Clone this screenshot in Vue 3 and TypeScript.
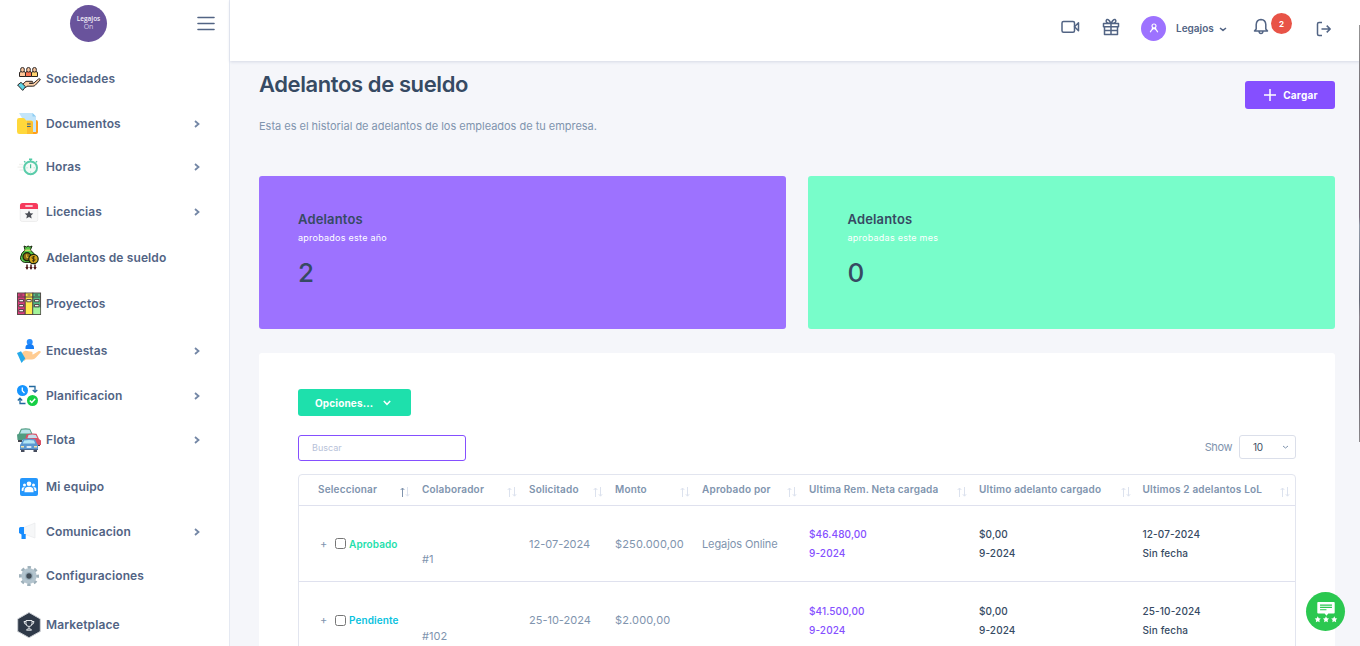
<script setup lang="ts">
interface MenuItem {
  id: string
  label: string
  expandable?: boolean
}

interface Row {
  status: string
  tone: string
  code: string
  requested: string
  amount: string
  approver: string
  salary: string
  last: string
  period: string
  lol: string
}

const menu: MenuItem[] = [
  { id: 'sociedades', label: 'Sociedades' },
  { id: 'documentos', label: 'Documentos', expandable: true },
  { id: 'horas', label: 'Horas', expandable: true },
  { id: 'licencias', label: 'Licencias', expandable: true },
  { id: 'adelantos', label: 'Adelantos de sueldo' },
  { id: 'proyectos', label: 'Proyectos' },
  { id: 'encuestas', label: 'Encuestas', expandable: true },
  { id: 'planificacion', label: 'Planificacion', expandable: true },
  { id: 'flota', label: 'Flota', expandable: true },
  { id: 'equipo', label: 'Mi equipo' },
  { id: 'comunicacion', label: 'Comunicacion', expandable: true },
  { id: 'configuraciones', label: 'Configuraciones' },
  { id: 'marketplace', label: 'Marketplace' },
]

const cards = [
  { tone: 'violet', title: 'Adelantos', note: 'aprobados este año', total: '2' },
  { tone: 'mint', title: 'Adelantos', note: 'aprobadas este mes', total: '0' },
]

const columns: string[] = [
  'Seleccionar',
  'Colaborador',
  'Solicitado',
  'Monto',
  'Aprobado por',
  'Ultima Rem. Neta cargada',
  'Ultimo adelanto cargado',
  'Ultimos 2 adelantos LoL',
]

const rows: Row[] = [
  { status: 'Aprobado', tone: 'approved', code: '#1', requested: '12-07-2024', amount: '$250.000,00', approver: 'Legajos Online', salary: '$46.480,00', last: '$0,00', period: '9-2024', lol: '12-07-2024' },
  { status: 'Pendiente', tone: 'pending', code: '#102', requested: '25-10-2024', amount: '$2.000,00', approver: '', salary: '$41.500,00', last: '$0,00', period: '9-2024', lol: '25-10-2024' },
]
</script>

<template>
  <div class="app">
    <aside class="sidebar">
      <div class="brand">
        <div class="logo"><span>Legajos</span><span class="on">On</span></div>
        <svg class="burger" viewBox="0 0 18 14"><path d="M1 1.500h16M1 7.500h16M1 13.500h16" /></svg>
      </div>
      <nav class="menu">
        <a v-for="item in menu" :key="item.id" class="item">
          <svg class="icon" viewBox="0 0 24 24">
            <g v-if="item.id === 'sociedades'" stroke="#2b2422" stroke-width="1" stroke-linejoin="round">
              <path d="M2.5 9.500v-3.500q0-1.300 1.700-1.500h2.800q1.500.2 1.500 1.500v3.500z" fill="#ffc89a" />
              <path d="M8.500 9.500v-3.500q0-1.300 1.500-1.500h3q1.500.2 1.500 1.500v3.500z" fill="#fb7452" />
              <path d="M14.500 9.500v-3.500q0-1.300 1.500-1.500h3q1.500.2 1.500 1.500v3.500z" fill="#ffd470" />
              <rect x="3.700" y="0.500" width="3.600" height="4.600" rx="1.700" fill="#f8c6a0" />
              <rect x="9.700" y="0.500" width="3.600" height="4.600" rx="1.700" fill="#f8c6a0" />
              <rect x="15.700" y="0.500" width="3.600" height="4.600" rx="1.700" fill="#f8c6a0" />
              <path d="M5.500 17.500 9 14.300h6.300q1.300 1.200 0 2h-3 4.200l5-4.300q2-.6 1.800.8l-5 5.400q-1 1-2.500 1H10L8.300 21z" fill="#fbcfa6" />
              <path d="M.6 18 4 15.400l4.600 4.400L5.700 23.400z" fill="#5fd4e6" />
            </g>
            <g v-else-if="item.id === 'documentos'">
              <path d="M12 8h7q2 0 2 2v10q0 2-2 2H9z" fill="#ff9f1c" />
              <path d="M2 1h13.500L19 4.500V20H5V6z" fill="#c3e5fa" />
              <path d="M15.500 1 19 4.500h-3.500z" fill="#8fcdf2" />
              <path d="M0 8.200Q0 6 2 6h4.500q1.500 0 2.500 2.500H14q2 0 2 2V22H2.300Q0 22 0 19.500z" fill="#ffd83b" />
              <path d="M10 9h4q2 0 2 2v11h-6z" fill="#fcc02e" />
              <path d="M10 12h3.600M10 14.500h3.600" stroke="#33658d" stroke-width="1.200" />
            </g>
            <g v-else-if="item.id === 'horas'" fill="none">
              <path d="M2 9.500h4M.5 12.200H6M2.500 15H6" stroke="#f1f1ee" stroke-width="1.300" />
              <circle cx="13.600" cy="12.800" r="6.400" fill="#f4faf7" stroke="#5accaa" stroke-width="2" />
              <path d="M12 4.200h3.200M13.600 4v2M19 6.200l1 1M8.200 6.200l-1 1" stroke="#50cba5" stroke-width="1.500" />
              <path d="M13.600 9.200v4" stroke="#47bd98" stroke-width="1.200" />
              <path d="M13.600 16.500v1M9.500 12.800h1M16.700 12.800h1" stroke="#a5ddca" />
            </g>
            <g v-else-if="item.id === 'licencias'">
              <rect x="3.200" y="3.500" width="17.600" height="18" rx="2" fill="#f8f8f8" stroke="#e6e6e6" stroke-width=".6" />
              <path d="M3 9V5.500Q3 3 5.500 3h13Q21 3 21 5.500V9z" fill="#f63a5c" />
              <path d="M8.300 6h7.400" stroke="#fff" stroke-width="1.400" />
              <path d="m12 10.500 1.300 2.700 3 .4-2.300 2 .7 3L12 17.100l-2.700 1.500.7-3-2.300-2 3-.4z" fill="#4c4f56" />
            </g>
            <g v-else-if="item.id === 'adelantos'" stroke="#17260d" stroke-width="1">
              <path d="m7 0 2.400 1 1.700-1 1.800 1L15 0l-1.600 4q5 3.500 4.800 8-.4 4.200-4.500 4.400H7.500Q3.400 15.500 3.500 11.500 4 7 8 4z" fill="#58c94a" />
              <path d="M7.500 4.200h6.200" stroke="#ffe279" />
              <circle cx="10" cy="10.700" r="4" fill="#8b6b15" stroke-width="1.200" />
              <path d="M9.700 8.400v3h2" stroke="#ecc83b" fill="none" />
              <circle cx="16.500" cy="13" r="4.700" fill="#d3a51d" stroke-width="1.200" />
              <path d="M18 10.800h-2q-1 .1-1 1t1 1h1q1 .1 1 1t-1 1h-2M16.500 10v6.300" stroke="#3d2c07" stroke-width=".9" fill="none" />
              <path d="M10 18.500v4M14 18.500v4M18 18.500v4" stroke="#4c1717" stroke-width="1.500" />
              <path d="m8.300 21 1.700 3 1.700-3M12.300 21l1.700 3 1.700-3M16.300 21l1.700 3 1.700-3" fill="#4c1717" stroke="none" />
            </g>
            <g v-else-if="item.id === 'proyectos'" stroke="#493f3c" stroke-width=".9">
              <rect x=".5" y="1" width="7.700" height="21.500" fill="#da3d7d" />
              <rect x="8.200" y="1" width="7.700" height="21.500" fill="#ffe84b" />
              <rect x="15.900" y="1" width="7.700" height="21.500" fill="#54bb86" />
              <rect x="16.300" y="15.500" width="6.900" height="6.600" fill="#a3f39b" stroke="none" />
              <path d="M.5 5h23M2.500 3h3M10.500 3h3M18 3h3" />
              <path d="M2 7.500h4.500v2.300H2zM2 12.500h4.500v2.300H2zM2 17.500h4.500v2.300H2zM9.700 7.500h4.500v2.300H9.700zM17.500 7.500H22v2.300h-4.500zM17.500 12.500H22v2.300h-4.500z" fill="#f4e9ed" />
            </g>
            <g v-else-if="item.id === 'encuestas'">
              <circle cx="12.700" cy="3" r="3" fill="#258dff" />
              <path d="M8.500 10V8.500q0-3.500 4.200-3.500T17 8.500V10z" fill="#147cf5" />
              <path d="M4.500 14.500Q7 11 10 12l5 .8q1.500 1 0 2.500h-3 4.500L21.700 12q2.200-.5 2.100 1.200L19 18.500q-1.700 2-4 2.100H9L7 22z" fill="#ffcc91" />
              <path d="m0 14 4-1.700 4.300 7.300L4.500 24z" fill="#25a9e9" />
            </g>
            <g v-else-if="item.id === 'planificacion'" fill="none">
              <circle cx="5.500" cy="6.500" r="5.500" fill="#1594ff" />
              <path d="M5.300 3.500v3.300L7.500 9" stroke="#fff" stroke-width="1.300" />
              <circle cx="15.500" cy="16.500" r="5.500" fill="#15cf45" />
              <path d="m12.800 16.500 2 2 3.400-3.800" stroke="#fff" stroke-width="1.500" />
              <path d="M12 2.500h6v5m-2.300-1.500 2.300 2.200L20.300 6M8.500 19.500H3v-5M.8 16.500 3 14.200l2.200 2.300" stroke="#23699e" stroke-width="1.300" />
            </g>
            <g v-else-if="item.id === 'flota'">
              <path d="M1 11v3h4v-3M19 15v3h4v-3" fill="#45474e" />
              <path d="M0 6.500 1.500 6 4 .7Q9 0 13 .7L15.500 6l1.500 1v5H.5z" fill="#509c81" />
              <path d="m3 5.500 1.700-3.700Q9 1.200 12.600 1.800l1.600 3.700z" fill="#b8e3eb" />
              <path d="m8 12 1.500-5.500Q14 5 19.500 5.700L22 11l2 1.500V17H8z" fill="#d85267" />
              <path d="m10.500 10 1-3q4-.8 7.300 0l1.600 3z" fill="#c4dfed" />
              <path d="M4 21v3h3.500v-3M16.500 21v3H20v-3" fill="#454c5d" />
              <path d="m4 15.500 2-4.300Q12 10 18 11.200l2 4.300 1 1.500v5H3v-5z" fill="#5c98d0" />
              <path d="m5.800 15.500 1.300-3q5-1 9.800 0l1.300 3z" fill="#b2e6f6" />
              <path d="M4 18h3v1.500H4M17 18h3v1.500h-3" fill="#f5e4a9" /><rect x="9.500" y="18" width="5" height="2" rx=".7" fill="#dce9f5" />
              <path d="M3 21.500h18" stroke="#496b96" />
            </g>
            <g v-else-if="item.id === 'equipo'">
              <rect x="3" y="3" width="18" height="18" rx="2" fill="#2597fc" />
              <g fill="#fff"><circle cx="12" cy="8.700" r="2.300" /><circle cx="7.500" cy="10" r="1.500" /><circle cx="16.500" cy="10" r="1.500" /><path d="M7.500 17.300v-2q0-3.500 4.500-3.500t4.500 3.500v2zM4.700 16v-2q0-2 3-2-1.300 1.500-1.300 4zM19.300 16v-2q0-2-3-2 1.300 1.500 1.300 4z" /></g>
            </g>
            <g v-else-if="item.id === 'comunicacion'">
              <path d="M7 7.500 18 3v15L7 14z" fill="#f6f7f8" stroke="#e8eaed" stroke-width=".7" />
              <path d="M7 7v7h1.700v5H4.500v-4.500L2 13V8.500Q2 7 3.500 7z" fill="#168cff" />
            </g>
            <g v-else-if="item.id === 'configuraciones'">
              <circle cx="12" cy="12" r="8.500" fill="none" stroke="#9eb0ba" stroke-width="3" stroke-dasharray="3.350 3.326" stroke-dashoffset="1.700" />
              <circle cx="12" cy="12" r="7.700" fill="#b2c3cd" />
              <circle cx="12" cy="12" r="4" fill="#9aafbc" /><circle cx="12" cy="12" r="2.700" fill="#424c56" />
            </g>
            <g v-else>
              <path d="M12-.5 23.300 5.900v12.500L12 24.700.7 18.400V5.900z" fill="#2f3948" stroke="#cdd0d5" stroke-width="1" />
              <path d="M9 7.500h6v3q0 3-3 3t-3-3zM9 8.500H7q.2 3 2.500 3M15 8.500h2q-.2 3-2.500 3M12 13.500v2.300M9.500 17.200q0-1.400 2.500-1.400t2.500 1.400z" stroke="#e3e6e9" fill="none" />
            </g>
          </svg>
          <span class="label">{{ item.label }}</span>
          <svg v-if="item.expandable" class="chevron" viewBox="0 0 6 8"><path d="m1 1 3.500 3L1 7" /></svg>
        </a>
      </nav>
    </aside>

    <div class="page">
      <header class="topbar">
        <svg class="video" viewBox="0 0 20 14"><rect x="1" y="1.500" width="12.500" height="10.700" rx="1.500" /><path d="m13.500 6.800 4-4v8z" /></svg>
        <svg class="gift" viewBox="0 0 18 18"><path d="M1.500 5.500h15v3.300h-15zM2.500 8.800v7.700h13V8.800M9 5.500v11M9 5.300Q3.500 5.500 4.200 2.500 5.700-.5 9 5.300q3.300-5.800 4.800-2.800.7 3-4.800 2.800M2.500 12.500h13" /></svg>
        <div class="avatar"><svg viewBox="0 0 12 12"><circle cx="6" cy="4" r="2" /><path d="M2.200 10.300Q3 8 6 6.200 9 8 9.800 10.300M4.700 5.800 3.600 8M7.300 5.800 8.400 8" /></svg></div>
        <span class="user">Legajos</span>
        <svg class="caret" viewBox="0 0 8 5"><path d="m1 1 3 2.400L7 1" /></svg>
        <div class="alerts">
          <svg class="bell" viewBox="0 0 16 17"><path d="M3.200 11V6.500Q3.500 1.700 8 1.500q4.500.2 4.800 5V11l1.700 2h-13zM6 13.200q.2 2.200 2 2.200t2-2.200" /></svg>
          <span class="badge">2</span>
        </div>
        <svg class="logout" viewBox="0 0 16 16"><path d="M6 1.500H3q-1.500 0-1.500 1.500v10q0 1.500 1.500 1.500h3M5.500 8H14M10.700 4.600 14.200 8l-3.500 3.400" /></svg>
      </header>

      <main class="content">
        <div class="heading">
          <div>
            <h1>Adelantos de sueldo</h1>
            <p class="lead">Esta es el historial de adelantos de los empleados de tu empresa.</p>
          </div>
          <button class="load"><svg viewBox="0 0 12 12"><path d="M6 0v12M0 6h12" /></svg>Cargar</button>
        </div>

        <div class="cards">
          <section v-for="card in cards" :key="card.tone" class="card" :class="card.tone">
            <h2>{{ card.title }}</h2>
            <small>{{ card.note }}</small>
            <strong>{{ card.total }}</strong>
          </section>
        </div>

        <section class="panel">
          <button class="options">Opciones...<svg viewBox="0 0 8 6"><path d="m.8 1 3.200 3.300L7.200 1" /></svg></button>
          <div class="tools">
            <input class="search" type="text" placeholder="Buscar" />
            <div class="length">
              <span>Show</span>
              <div class="select">10<svg viewBox="0 0 7 5"><path d="m1 1 2.500 2L6 1" /></svg></div>
            </div>
          </div>
          <div class="table">
            <div class="tr head">
              <div v-for="(column, i) in columns" :key="column" class="th" :class="['c' + i, { sorted: i === 0 }]">
                <span>{{ column }}</span>
                <svg class="sort" viewBox="0 0 10 10"><path class="up" d="M2.500 10V1M.7 3l1.800-2 1.800 2" /><path d="M7.500 0v9M5.800 7.200l1.700 2 1.700-2" /></svg>
              </div>
            </div>
            <div v-for="row in rows" :key="row.code" class="tr body">
              <div class="status"><span class="plus">+</span><input type="checkbox" /><b :class="row.tone">{{ row.status }}</b></div>
              <div class="code">{{ row.code }}</div>
              <div>{{ row.requested }}</div>
              <div class="amount">{{ row.amount }}</div>
              <div class="approver">{{ row.approver }}</div>
              <div class="pair link"><span>{{ row.salary }}</span><span>{{ row.period }}</span></div>
              <div class="pair"><span>{{ row.last }}</span><span>{{ row.period }}</span></div>
              <div class="pair"><span>{{ row.lol }}</span><span>Sin fecha</span></div>
            </div>
          </div>
        </section>
      </main>
    </div>

    <div class="edge"></div>
    <div class="chat">
      <svg viewBox="0 0 24 24"><path d="M3.500 1h17q1 0 1 1v10.500q0 1-1 1h-6L12.500 16l-2-2.500h-7q-1 0-1-1V2q0-1 1-1z" fill="#fff" /><path d="M5.500 4.500h13M5.500 7h13M5.500 9.500h7" stroke="#2bc850" stroke-width="1.200" /><path v-for="x in [3, 12, 21]" :key="x" :transform="`translate(${x} 20) scale(1.15)`" d="m0-3 .9 1.900 2 .3-1.400 1.500.3 2L0 1.800l-1.800.9.3-2L-2.900-.8l2-.3z" fill="#fff" /></svg>
    </div>
  </div>
</template>

<style>
html,
body {
  margin: 0;
  overflow: hidden;
}
</style>

<style scoped>
* {
  box-sizing: border-box;
}
.app {
  display: flex;
  position: relative;
  width: 1360px;
  height: 646px;
  overflow: hidden;
  background: #f5f6fa;
  color: #8094ae;
  font-family: Inter, 'Open Sans', sans-serif;
  font-size: 11px;
}
svg {
  display: block;
  fill: none;
  overflow: visible;
  flex: none;
}
button {
  border: 0;
  padding: 0;
  color: #fff;
  font-family: inherit;
}
.sidebar {
  width: 230px;
  flex: none;
  background: #fff;
  border-right: 1px solid #e5e9f2;
}
.brand {
  display: flex;
  align-items: center;
  height: 56px;
  padding: 0 14px 10px 70px;
  justify-content: space-between;
}
.logo {
  display: flex;
  flex-direction: column;
  align-items: center;
  justify-content: center;
  width: 37px;
  height: 37px;
  padding-bottom: 1px;
  border-radius: 50%;
  background: #69539c;
  color: #f2eef8;
  font: 600 6.5px/8px 'Open Sans', sans-serif;
}
.on {
  color: #d6cde6;
  font-size: 7px;
  font-weight: 400;
  line-height: 7px;
}
.burger {
  width: 18px;
  height: 14px;
  stroke: #526484;
  stroke-width: 1.600;
  stroke-linecap: round;
}
.menu {
  display: grid;
  grid-template-rows: 46px 44px 42px 48px 44px 48px 46px 44px 44px 50px 40px 48px 50px;
}
.item {
  display: flex;
  align-items: center;
  padding: 0 29px 0 17px;
  color: #526484;
  font-size: 12px;
  font-weight: 600;
  letter-spacing: 0.12px;
}
.icon {
  width: 24px;
  height: 24px;
  margin-right: 5px;
}
.label {
  flex: 1;
  padding-bottom: 1px;
}
.chevron {
  width: 6px;
  height: 8px;
  stroke: #7487a6;
  stroke-width: 1.800;
}
.page {
  flex: 1;
  min-width: 0;
}
.topbar {
  display: flex;
  align-items: center;
  height: 61px;
  padding: 0 28px 6px 830px;
  background: #fff;
  box-shadow: 0 1px 3px #d5d9e5;
  stroke: #526484;
  stroke-width: 1.500;
  stroke-linejoin: round;
}
.video {
  width: 20px;
  height: 14px;
  margin: -1px 21.500px 0 0.500px;
}
.gift {
  width: 18px;
  height: 18px;
  margin: -1px 21px 0 0;
}
.avatar {
  display: grid;
  place-items: center;
  width: 25px;
  height: 25px;
  border-radius: 50%;
  background: #9d72ff;
  stroke: #fff;
  stroke-width: 1.100;
  margin: 1px 10px 0 0;
}
.avatar svg {
  width: 12px;
  height: 12px;
}
.user {
  width: 38px;
  margin-right: 5px;
  color: #526484;
  font-size: 10px;
  font-weight: 600;
  white-space: nowrap;
  padding-top: 1px;
}
.caret {
  width: 8px;
  height: 5px;
  margin-top: 4px;
}
.alerts {
  display: flex;
  align-items: flex-start;
  height: 17px;
  margin: 0 24px 0 26px;
}
.bell {
  width: 16px;
  height: 17px;
  margin-top: -1px;
}
.badge {
  display: grid;
  place-items: center;
  width: 21px;
  height: 21px;
  margin: -6px 0 0 2px;
  border-radius: 50%;
  background: #e85347;
  color: #fff;
  font-size: 8px;
  font-weight: 700;
}
.logout {
  width: 16px;
  height: 16px;
  margin-top: 3px;
}
.content {
  padding: 0 25px 0 29px;
}
.heading {
  display: flex;
  justify-content: space-between;
  height: 115px;
}
h1 {
  margin: 8px 0 0;
  color: #364a63;
  font-size: 22px;
  line-height: 30px;
  font-weight: 600;
  letter-spacing: -0.4px;
}
.lead {
  margin: 17px 0 0;
  line-height: 20px;
  letter-spacing: -0.02px;
}
.load {
  display: flex;
  align-items: center;
  justify-content: center;
  gap: 7px;
  width: 90px;
  height: 28px;
  padding: 0 0 1px 2px;
  margin-top: 20px;
  border-radius: 3px;
  background: #854fff;
  font-size: 10px;
  font-weight: 700;
  letter-spacing: 0.25px;
}
.load svg {
  width: 12px;
  height: 12px;
  stroke: #fff;
  stroke-width: 1.500;
}
.cards {
  display: grid;
  grid-template-columns: 1fr 1fr;
  gap: 22px;
}
.card {
  display: flex;
  flex-direction: column;
  height: 153px;
  padding: 33px 39px;
  border-radius: 3px;
}
.violet {
  background: #9d72ff;
}
.mint {
  padding-left: 39.500px;
  background: #78fdca;
}
.card h2 {
  margin: 0;
  color: #364a63;
  font-size: 13px;
  line-height: 20px;
  font-weight: 600;
  letter-spacing: 0.15px;
}
.card small {
  color: #fff;
  font-size: 9px;
  line-height: 18px;
  letter-spacing: 0.25px;
}
.card strong {
  margin-top: 10px;
  color: #364a63;
  font-size: 26px;
  line-height: 32px;
  font-weight: 500;
}
.panel {
  height: 320px;
  margin-top: 24px;
  padding: 36px 39px 0;
  border-radius: 3px;
  background: #fff;
}
.options {
  display: flex;
  align-items: center;
  gap: 10px;
  width: 113px;
  height: 27px;
  padding-left: 17px;
  border-radius: 3px;
  background: #1ee0ac;
  font-size: 10px;
  font-weight: 700;
  letter-spacing: 0.15px;
}
.options svg {
  width: 8px;
  height: 6px;
  stroke: #fff;
  stroke-width: 1.500;
}
.tools {
  display: flex;
  justify-content: space-between;
  margin-top: 19px;
}
.search {
  width: 168px;
  height: 26px;
  padding: 0 13px 1px;
  border: 1px solid #854fff;
  border-radius: 3px;
  outline: 0;
  font-family: inherit;
  font-size: 9px;
}
.search::placeholder {
  color: #b7c2d9;
}
.length {
  display: flex;
  gap: 7px;
  line-height: 24px;
  letter-spacing: -0.4px;
}
.select {
  display: flex;
  align-items: center;
  justify-content: space-between;
  width: 57px;
  height: 24px;
  padding: 0 6px 0 13px;
  border: 1px solid #dbdfea;
  border-radius: 3px;
  color: #3c4d62;
  font-size: 10px;
}
.select svg {
  width: 7px;
  height: 5px;
  stroke: #8094ae;
}
.table {
  height: 200px;
  margin-top: 13px;
  border: 1px solid #e2e5ef;
  border-radius: 4px 4px 0 0;
}
.tr {
  display: grid;
  grid-template-columns: 123px 107px 86px 87px 107px 170px 163.500px 1fr;
  border-bottom: 1px solid #dfe1ee;
}
.head {
  height: 31px;
}
.th {
  display: flex;
  align-items: center;
  justify-content: space-between;
  padding-right: 12px;
  font-size: 10px;
  font-weight: 600;
  letter-spacing: 0.18px;
  white-space: nowrap;
}
.th span {
  padding-bottom: 2px;
}
.c0 {
  padding-left: 19px;
}
.c7 {
  padding-right: 5px;
}
.sort {
  width: 10px;
  height: 10px;
  margin-top: 4px;
  stroke: #dce2ee;
}
.sorted .up {
  stroke: #8094ae;
}
.body {
  height: 76px;
  align-items: center;
  white-space: nowrap;
}
.body:last-child {
  height: 77px;
}
.status {
  display: flex;
  align-items: center;
  padding-left: 21px;
}
.plus {
  width: 15px;
}
.status input {
  width: 11px;
  height: 11px;
  margin: 0 3px 0 0;
}
.status b {
  font-size: 10px;
  font-weight: 600;
  letter-spacing: 0.1px;
}
.amount {
  letter-spacing: 0.15px;
}
.approver {
  letter-spacing: -0.1px;
}
.approved {
  color: #1ee0ac;
}
.pending {
  color: #09c2de;
}
.code {
  padding-top: 30px;
}
.body:last-child .code {
  padding-top: 32px;
}
.pair {
  display: flex;
  flex-direction: column;
  color: #364a63;
  font-size: 10px;
  font-weight: 500;
  line-height: 19px;
  letter-spacing: 0.12px;
}
.body:last-child .pair {
  padding-top: 1px;
  line-height: 18.500px;
}
.link {
  color: #854fff;
}
.edge {
  position: absolute;
  top: 25px;
  right: 0;
  width: 1px;
  height: 417px;
  background: linear-gradient(#969696, #6e6870 20%, #786b7d 46%, #929aa8 48%, #666977 66%, #8c858e 70%, #67616b 84%, #8c898c);
}
.chat {
  display: grid;
  place-items: center;
  position: absolute;
  top: 592px;
  left: 1306px;
  width: 39px;
  height: 39px;
  border-radius: 50%;
  background: #2bc850;
}
.chat svg {
  width: 22px;
  height: 22px;
}
</style>
